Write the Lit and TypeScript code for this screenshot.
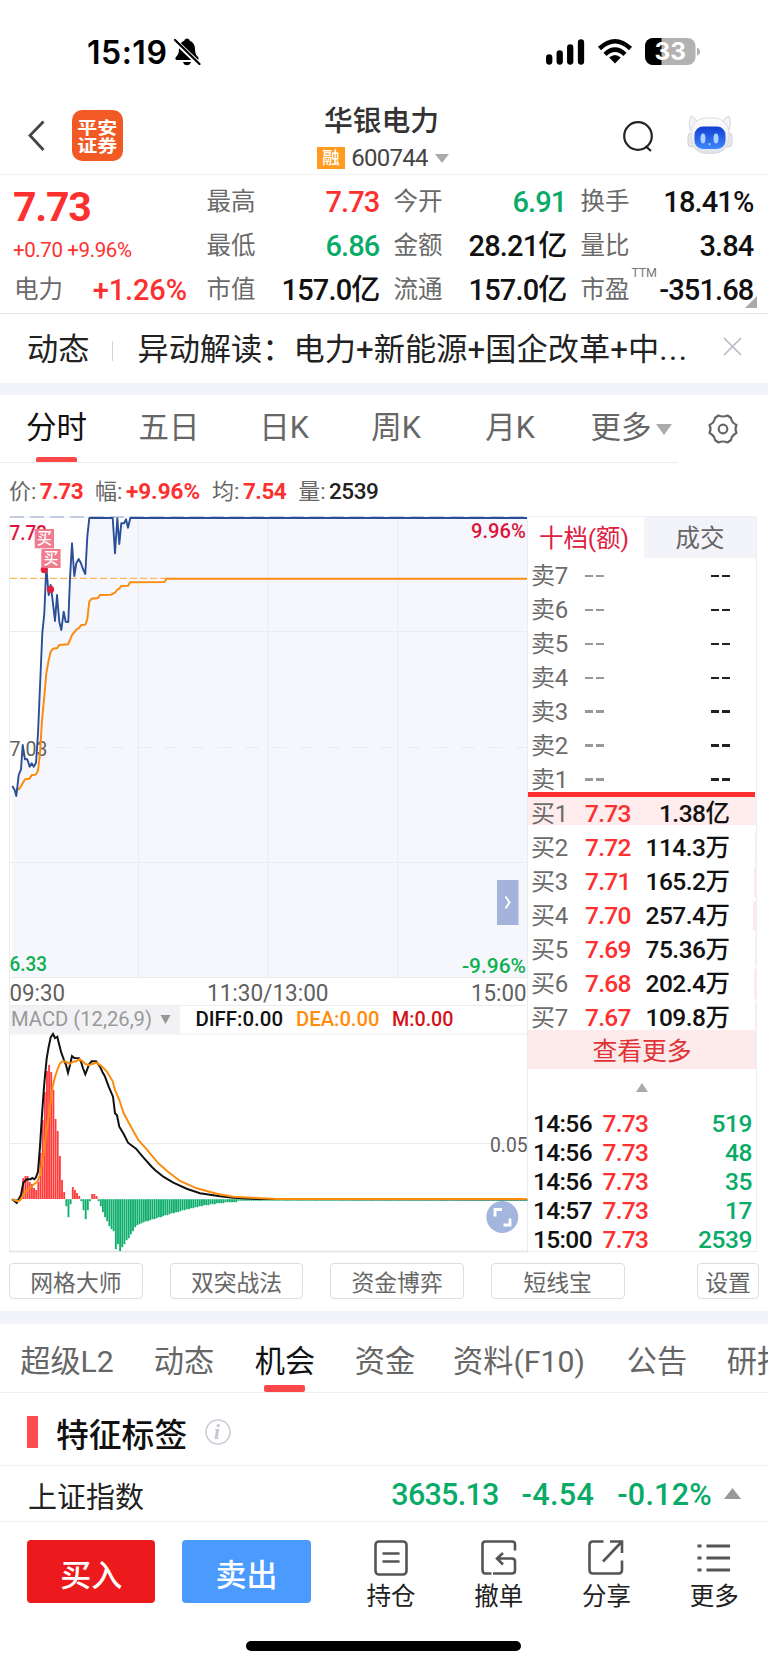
import { LitElement, html, svg, css } from "lit";
import { customElement } from "lit/decorators.js";

type Pt = [number, number];

/* Session price samples, in chart coordinates (origin at the chart's top left). */
const scale = (pts: Pt[], dy: number): Pt[] => pts.map(([x, y]) => [x / 3, y / 3 + dy]);
const PRICE = scale([
  [37,858],[44,870],[49,888],[56,825],[63,808],[68,735],[75,778],[82,778],[89,800],[95,790],[101,800],[108,788],
  [114,700],[120,560],[127,400],[133,340],[139,200],[146,285],[152,255],[159,310],[165,363],[171,285],[178,365],
  [184,390],[191,335],[197,365],[205,366],[210,235],[216,130],[223,228],[229,190],[236,177],[242,188],[249,207],
  [256,222],[262,110],[268,54],[338,54],[345,160],[352,55],[358,132],[364,70],[372,70],[378,58],[384,83],[391,54],
  [1581,54]], -16);
const AVERAGE = scale([
  [49,868],[57,868],[65,855],[75,838],[88,836],[95,826],[107,824],[114,812],[120,760],[126,660],[133,590],[139,520],
  [146,480],[152,455],[159,446],[172,444],[178,435],[204,433],[210,420],[216,405],[230,388],[237,384],[243,376],
  [256,374],[262,358],[268,305],[275,296],[294,294],[300,285],[333,284],[346,277],[352,269],[358,266],[364,258],
  [384,257],[391,247],[493,246],[500,236],[1581,236]], -16);
const DIFF = scale([
  [37,538],[50,549],[63,525],[70,488],[80,478],[92,478],[97,474],[103,478],[108,472],[114,455],[120,380],[127,270],
  [133,190],[140,115],[146,80],[152,52],[159,42],[165,54],[172,50],[178,75],[184,98],[192,120],[198,135],[204,158],
  [210,135],[216,108],[223,114],[237,115],[243,125],[249,145],[256,163],[268,132],[275,124],[288,124],[300,140],
  [307,155],[314,168],[326,200],[339,230],[345,280],[351,286],[358,320],[371,342],[384,368],[408,386],[430,412],
  [455,440],[465,450],[490,470],[520,488],[560,506],[600,520],[660,529],[700,533],[770,537],[1581,538]], 504);
const DEA = scale([
  [37,538],[50,543],[57,543],[63,537],[75,518],[85,508],[100,494],[112,485],[120,465],[130,410],[140,330],[150,260],
  [158,200],[165,170],[172,150],[180,130],[188,124],[200,126],[208,132],[218,126],[230,123],[238,118],[248,124],
  [256,132],[266,136],[288,128],[302,136],[320,154],[338,184],[345,210],[358,240],[371,280],[390,315],[415,360],
  [440,388],[475,430],[505,456],[540,483],[590,505],[650,521],[700,530],[770,534],[830,537],[1581,537]], 504);
/* Height of each MACD bar against the zero line; positive is red. */
const BARS: number[] = [-1,-2,-4,0,4,21,23,23,17,15,11,9,17,46,79,107,128,134,127,109,80,68,43,19,7,-7,-18,-5,12,9,6,3,
  -2,-11,-20,-11,-2,5,5,3,-2,-7,-13,-18,-22,-27,-30,-32,-50,-45,-52,-48,-45,-41,-39,-35,-32,-28,-26,-25,-24,-23,-22,
  -22,-21,-20,-20,-19,-18,-18,-17,-16,-16,-15,-14,-14,-13,-13,-12,-11,-11,-10,-10,-9,-9,-8,-8,-7,-7,-6,-6,-6,-5,-5,-5,
  -4,-4,-4,-4,-3,-3,-3,-3,-3,-3];
while (BARS.length < 240) BARS.push(-1.5);

const path = (p: Pt[]) => "M" + p.map(([x, y]) => `${x.toFixed(1)} ${y.toFixed(1)}`).join("L");

@customElement("stock-chart")
class StockChart extends LitElement {
  static styles = css`
    :host { display: block; width: 528px; height: 737px; }
    svg { display: block; font-family: Roboto, "Noto Sans CJK SC", sans-serif; }
    .grid { stroke: #ebecef; stroke-width: 1; fill: none; }
    .area { fill: #f5f7fc; }
    .price { stroke: #2b4f96; stroke-width: 1.9; fill: none; stroke-linejoin: round; }
    .avg { stroke: #fb8c10; stroke-width: 2; fill: none; }
    .diff { stroke: #111; stroke-width: 2; fill: none; }
    .gray { fill: #606060; }
    .soft { fill: #999; }
    .up { fill: #dc143c; }
    .down { fill: #10b050; }
    .black { fill: #111; font-weight: 500; }
    .orange { fill: #ff8c0a; font-weight: 500; }
    .red { fill: #d41219; font-weight: 500; }
    .mark { fill: #ef7285; fill-opacity: .93; }
    .white { fill: #fff; font-weight: 500; }
    .m { font-weight: 500; }
  `;
  render() {
    const t = (s: string, x: number, y: number, w: number, size: number, c: string) =>
      svg`<text x=${x} y=${y} textLength=${w} lengthAdjust="spacingAndGlyphs" font-size=${size} class=${c}>${s}</text>`;
    return html`<svg width="528" height="737" viewBox="0 0 528 737">
      <path class="area" d="${path(PRICE)}L527 461L12.3 461Z" />
      <path class="grid" d="M9.5 1V736M138.5 1V461M268 1V461M398 1V461M527.5 1V736M9 1H528M9 115.5H527M9 461.5H528M9 346.5H527M9 489.5H528M9 518H528M9 627.5H527" />
      <path class="grid" stroke-dasharray="14 13" d="M56 231.5H527" />
      <path d="M9 735.5H528" stroke="#e8e8ea" stroke-width="2" />
      ${t("7.73", 9.5, 23.5, 37.5, 20, "up m")}
      ${t("9.96%", 471, 21.5, 55, 20, "up m")}
      ${t("7.03", 9.5, 239.5, 38, 20.5, "gray")}
      ${t("6.33", 9.5, 455, 37.5, 20, "down m")}
      ${t("-9.96%", 462, 457, 64, 20, "down m")}
      <path d="M10 1H527" stroke="#8fa2cb" stroke-dasharray="14 6" />
      <path d="M10 62.3H172" stroke="#fdb65e" stroke-width="1.3" stroke-dasharray="7 3" />
      <path class="avg" d=${path(AVERAGE)} />
      <path class="price" d=${path(PRICE)} />
      <circle cx="44.3" cy="53.7" r="3.6" fill="#e0203f" />
      <circle cx="50.5" cy="73.4" r="3.6" fill="#e0203f" />
      <rect class="mark" x="34.7" y="13" width="19.3" height="19.3" />
      <rect class="mark" x="41.3" y="33" width="19.3" height="19" />
      ${t("买", 37, 28.2, 15, 15.5, "white")}
      ${t("买", 43.5, 48, 15, 15.5, "white")}
      <rect x="497" y="364" width="21.5" height="45" fill="#a3b3dc" />
      <path d="M505.5 380.5L509.5 386.5L505.5 392.5" stroke="#fff" stroke-width="2" fill="none" />

      ${t("09:30", 9.5, 485, 55.5, 23, "gray")}
      ${t("11:30/13:00", 207, 485, 121.5, 23, "gray")}
      ${t("15:00", 471, 485, 55.5, 23, "gray")}

      <rect x="10" y="490" width="170" height="27" fill="#f2f2f4" />
      ${t("MACD (12,26,9)", 11, 509.5, 141, 21, "soft")}
      <path d="M160.5 499h10l-5 9z" fill="#969696" />
      ${t("DIFF:0.00", 195.5, 509.5, 87.5, 20.5, "black")}
      ${t("DEA:0.00", 296, 509.5, 83.5, 20.5, "orange")}
      ${t("M:0.00", 392, 509.5, 61.5, 20.5, "red")}

      ${BARS.map((h, i) => svg`<rect x=${11.6 + i * 2.152} y=${h > 0 ? 683 - h : 683.2} width="1.85"
        height=${Math.abs(h)} fill=${h > 0 ? "#ff3b3b" : "#10ae6c"} />`)}
      <path class="diff" d=${path(DIFF)} />
      <path class="avg" d=${path(DEA)} />
      ${t("0.05", 490, 635.5, 37.5, 20, "gray")}
      <circle cx="502.3" cy="701" r="16" fill="#a5b6de" />
      <path d="M495 700.5V693.5H502M503.5 709H510V702.5" stroke="#fff" stroke-width="2.8" fill="none" />
    </svg>`;
  }
}

@customElement("order-book")
class OrderBook extends LitElement {
  static styles = css`
    :host { display: block; width: 229px; height: 736px; box-sizing: border-box; border: solid #eeeff2; border-width: 1px 1px 1px 0; }
    .tabs { display: flex; height: 41px; }
    .tab { flex: 1; display: flex; align-items: center; justify-content: center; font-size: 24.5px; color: #666; background: #f3f4f9; letter-spacing: -.1px; padding-bottom: 2px; }
    .tab.on { background: #fff; color: #e0203f; padding-right: 4px; }
    .row { display: grid; grid-template-columns: 53px 50px 1fr; height: 33.95px; align-items: center; padding: 3px 26.5px 0 3px; box-sizing: border-box; font-size: 24.5px; line-height: 30px; position: relative; }
    .row.first { background: linear-gradient(#ffecec, #ffecec) 0 1px / 100% 28px no-repeat; }
    .n { color: #6b6b6b; white-space: nowrap; font-size: 24px; letter-spacing: -.3px; }
    .p { color: #fd2f2f; font-weight: 500; letter-spacing: -.7px; padding-left: 1px; }
    .v { color: #111; font-weight: 500; text-align: right; white-space: nowrap; letter-spacing: -.5px; }
    .bar { position: absolute; right: 0; top: 4px; height: 30px; background: #ffe9e9; }
    .dash { display: flex; gap: 3px; padding-left: 1px; }
    .dash.r { justify-content: flex-end; }
    .dash i { width: 8px; height: 2.5px; background: #999; }
    .dash.r i { background: #222; }
    .sells { height: 234px; }
    .limit { height: 5.5px; background: #fd2f2f; margin-right: 1px; }
    .buys { height: 232.5px; }
    .buys .row { top: -1.5px; }
    .more { height: 39px; background: #fdeaea; color: #e13337; font-size: 24.8px; display: flex; align-items: center; justify-content: center; }
    .up { height: 38px; display: flex; align-items: center; justify-content: center; }
    .deal { display: grid; grid-template-columns: 68.5px 60px 1fr; height: 28.9px; align-items: center; padding: 0 4px 0 5px; font-size: 24.5px; font-weight: 500; color: #111; line-height: 28px; letter-spacing: -.65px; }
    .deals { padding-top: 3.5px; }
    .q { text-align: right; color: #0aab68; letter-spacing: -.4px; }
  `;
  render() {
    const buys: [string, string, number][] = [["7.73", "1.38亿", 0], ["7.72", "114.3万", 1], ["7.71", "165.2万", 2],
      ["7.70", "257.4万", 3.5], ["7.69", "75.36万", 0.6], ["7.68", "202.4万", 2.5], ["7.67", "109.8万", 1]];
    const deals = [["14:56", "519"], ["14:56", "48"], ["14:56", "35"], ["14:57", "17"], ["15:00", "2539"]];
    return html`
      <div class="tabs"><div class="tab on">十档(额)</div><div class="tab">成交</div></div>
      <div class="sells">${[7, 6, 5, 4, 3, 2, 1].map(n => html`<div class="row">
        <span class="n">卖${n}</span><span class="dash"><i></i><i></i></span><span class="dash r"><i></i><i></i></span></div>`)}</div>
      <div class="limit"></div>
      <div class="buys">${buys.map(([p, v, w], i) => html`<div class="row ${i ? "" : "first"}">
        <span class="n">买${i + 1}</span><span class="p">${p}</span><span class="v">${v}</span>
        <span class="bar" style="width:${w}px"></span></div>`)}</div>
      <div class="more">查看更多</div>
      <div class="up"><svg width="12" height="9"><path d="M6 0L12 9H0Z" fill="#aaa"/></svg></div>
      <div class="deals">${deals.map(([t, q]) => html`<div class="deal"><span>${t}</span><span class="p">7.73</span><span class="q">${q}</span></div>`)}</div>`;
  }
}

@customElement("app-root")
class AppRoot extends LitElement {
  static styles = css`
    :host { display: block; width: 768px; height: 1665px; overflow: hidden; background: #fff; color: #111; font-family: Roboto, "Noto Sans CJK SC", sans-serif; }
    * { box-sizing: border-box; }
    svg { display: block; flex: none; }
    .status { height: 101px; display: flex; align-items: flex-start; padding: 37px 68px 0 87px; }
    .clock { font: 600 32px/31px Inter, sans-serif; letter-spacing: .5px; width: 86px; color: #000; white-space: nowrap; }
    .sp { flex: 1; }
    .wifi, .battery { margin-left: 11px; }
    .head { height: 74px; display: flex; border-bottom: 1px solid #f0f0f2; padding: 0 35px 0 27px; }
    .head > * { flex: none; }
    .back { margin: 19px 26px 0 0; }
    .logo { margin-top: 9px; width: 50.5px; height: 51px; border-radius: 10px; background: #f15a24; color: #fff; font: 700 20px/20px "Noto Sans CJK SC", sans-serif; text-align: center; padding-top: 5.5px; }
    .logo span { display: block; transform: scaleY(.87); }
    .title { margin-left: 144px; width: 230px; text-align: center; display: flex; flex-direction: column; align-items: center; }
    .name { font-size: 28.8px; line-height: 34px; color: #333; padding-top: 3px; height: 42px; width: 118px; white-space: nowrap; font-weight: 500; }
    .code { display: flex; align-items: center; height: 28px; font-size: 24px; color: #444; letter-spacing: -.7px; margin-left: 3px; margin-top: 1px; }
    .rong { width: 28px; height: 22px; background: #ff9c20; color: #fff; font-size: 17.5px; line-height: 22px; font-weight: 500; margin-right: 6px; padding-left: 5px; display: flex; align-items: center; }
    .tri { margin-left: 7px; }
    .find { margin: 19px 0 0 125px; }
    .bot { margin: 14px 0 0 33px; }
    .quote { height: 138.5px; border-bottom: 1.5px solid #e6e6f0; display: grid; grid-template-columns: 178.500px 173px 173px 173px; column-gap: 14px; padding: 0 14px; position: relative; }
    .col { display: flex; flex-direction: column; padding-top: 5px; }
    .cell { height: 44px; display: flex; justify-content: space-between; align-items: center; font-size: 29px; font-weight: 500; line-height: 34px; letter-spacing: -.85px; white-space: nowrap; color: #111; position: relative; }
    .col:first-child .cell { width: 173px; letter-spacing: -.1px; }
    .lab { font-size: 24.5px; color: #6a6a6a; font-weight: 400; letter-spacing: 0; }
    .red { color: #fd3030; }
    .green { color: #0aab68; }
    .big { font-size: 41px; font-weight: 700; color: #fd3030; height: 57px; line-height: 55px; letter-spacing: -1.2px; margin-left: -1px; }
    .chg { font-size: 20.5px; color: #fd3030; font-weight: 400; height: 31px; line-height: 26px; white-space: nowrap; letter-spacing: -.4px; margin-left: -1px; }
    .ttm { position: absolute; left: 51px; top: -2px; font-size: 12.5px; line-height: 14px; font-weight: 400; color: #777; letter-spacing: -.2px; }
    .corner { position: absolute; right: 11px; bottom: 5px; }
    .news { height: 69px; display: flex; align-items: center; font-size: 31.2px; color: #222; padding: 0 26px 3px 27px; white-space: nowrap; }
    .vr { width: 1px; height: 20px; background: #d4d4d8; margin: 8px 24px 0 23px; }
    .headline { width: 555px; letter-spacing: .05px; }
    .dots { letter-spacing: 1.6px; }
    .close { margin-left: auto; margin-bottom: 0; }
    .band { height: 12.5px; background: #f3f4f9; }
    .tabs { height: 68px; display: flex; padding-top: 15px; position: relative; font-size: 30.5px; line-height: 36px; color: #666; }
    .tabs .line { position: absolute; left: 0; bottom: 0; height: 1px; width: 678px; background: #ececef; }
    .more-arrow { margin: 14px 0 0 -15px; }
    .gear { margin: 3px 0 0 35px; }
    .t { display: flex; flex: none; justify-content: center; position: relative; white-space: nowrap; }
    .t.on { color: #111; }
    .t.on::after { content: ""; position: absolute; left: 50%; margin-left: -21px; width: 41px; height: 6.5px; border-radius: 2px; background: #fb4747; bottom: 0; }
    .info { height: 52.5px; display: flex; align-items: center; padding-left: 9px; padding-top: 4px; font-size: 22px; color: #666; line-height: 28px; gap: 12px; }
    .info b { font-weight: 700; color: #fd3030; font-size: 22.5px; letter-spacing: -.5px; margin-left: 3.5px; }
    .info b.w { letter-spacing: 0; }
    .info b.k { color: #222; font-weight: 500; }
    .main { display: flex; height: 737px; }
    .tools { display: flex; height: 58.5px; padding: 10px 9px 0; gap: 26.8px; }
    .btn { width: 133.8px; height: 36px; border: 1.5px solid #dedede; border-radius: 4px; display: flex; align-items: center; justify-content: center; font-size: 22.8px; color: #666; padding-top: 1px; }
    .btn.set { width: 62px; margin-left: auto; }
    .tabs2 { height: 69px; display: flex; padding: 15px 0 0 18px; border-bottom: 1px solid #f0f0f4; font-size: 30.2px; line-height: 46px; color: #666; overflow: hidden; }
    .tag { height: 73px; display: flex; align-items: center; padding: 8px 0 0 27px; border-bottom: 1.5px solid #f0f0f4; font-size: 32.8px; font-weight: 500; }
    .pin { width: 11px; height: 32px; background: #fd4d50; margin-right: 18px; margin-bottom: 2px; }
    .i { margin: 0 0 2px 18px; }
    .index { height: 56px; display: flex; align-items: center; border-bottom: 1.5px solid #f0f0f4; padding: 3px 27px 0 28px; color: #222; font-size: 29px; }
    .index .green { font-size: 30.5px; font-weight: 500; letter-spacing: -.75px; margin-left: 23px; }
    .index .green.b { letter-spacing: .35px; }
    .index .green.c { letter-spacing: .25px; }
    .index svg { margin: 0 0 3px 12px; }
    .actions { height: 119.5px; display: flex; padding: 18px 0 0 27px; }
    .trade { width: 128.5px; height: 63px; border-radius: 4px; background: #ec1a1c; color: #fff; font-size: 31px; font-weight: 500; display: flex; align-items: center; justify-content: center; margin-right: 27px; padding-top: 2px; }
    .trade.sell { background: #4b9afe; margin-right: 26.5px; }
    .act { width: 107.8px; display: flex; flex-direction: column; align-items: center; font-size: 24.5px; line-height: 30px; color: #222; }
    .act svg { margin-bottom: 6.5px; }
    .home { width: 275px; height: 9.5px; border-radius: 5px; background: #000; margin: 0 0 0 246px; }
  `;
  render() {
    const cell = (l: string, v: string, c = "", extra: unknown = "") =>
      html`<div class="cell"><span class="lab">${l}</span>${extra}<span class=${c}>${v}</span></div>`;
    const tab = (s: string, w: number, on = false) => html`<div class="t ${on ? "on" : ""}" style="width:${w}px">${s}</div>`;
    return html`
      <div class="status">
        <span class="clock">15:19</span>
        <svg width="28" height="29" viewBox="0 0 28 29"><path fill="#000" d="M14 1.5c1.5 0 2.5 1 2.7 2.2 3.6 1.3 5.3 4.300 5.300 8.300 0 4.500 1.500 6.300 3 8 1.200 1.500.7 3-1 3H4c-1.700 0-2.200-1.500-1-3 1.500-1.700 3-3.500 3-8 0-4 1.700-7 5.300-8.300C11.500 2.500 12.500 1.500 14 1.500zM10 25h8c-.5 2-2 3.300-4 3.300S10.500 27 10 25z"/><path d="M1.500 3.500L26 27" stroke="#fff" stroke-width="5"/><path d="M2 3L26.500 27" stroke="#000" stroke-width="2.200" stroke-linecap="round"/></svg>
        <span class="sp"></span>
        <svg width="40" height="30" viewBox="0 0 40 30"><path d="M3.200 20.500v4M13.700 16.500v8M24.200 10.500v14M35 5.500v19" stroke="#000" stroke-width="6.300" stroke-linecap="round"/></svg>
        <svg class="wifi" width="36" height="30" viewBox="0 0 36 30" fill="none" stroke="#000" stroke-width="4.500"><path d="M2.500 11.500Q18-3 33.500 11.500M8 17.300Q18 8 28 17.300"/><path d="M18 26.500L12.200 20.500Q18 15.500 23.800 20.500Z" fill="#000" stroke="none"/></svg>
        <svg class="battery" width="56" height="30" viewBox="0 0 56 30"><defs><clipPath id="b"><rect x="1" y="1" width="50.500" height="27" rx="8"/></clipPath></defs><g clip-path="url(#b)"><rect width="55" height="30" fill="#b2b2b2"/><rect width="17.500" height="30" fill="#000"/></g><path d="M53 10.500q3 1 3 4t-3 4z" fill="#b2b2b2"/><text x="10.500" y="23.300" textLength="31.500" lengthAdjust="spacingAndGlyphs" font-family="Inter" font-weight="700" font-size="24" fill="#fff">33</text></svg>
      </div>
      <div class="head">
        <svg class="back" width="19" height="32" viewBox="0 0 19 32"><path d="M16.500 1.500L3 15.500L16.500 30" fill="none" stroke="#444" stroke-width="2.800"/></svg>
        <div class="logo"><span>平安<br/>证券</span></div>
        <div class="title">
          <div class="name">华银电力</div>
          <div class="code"><span class="rong">融</span>600744<svg class="tri" width="14" height="9"><path d="M0 0H14L7 9Z" fill="#aaa"/></svg></div>
        </div>
        <svg class="find" width="32" height="34" viewBox="0 0 32 34" fill="none" stroke="#222" stroke-width="2.200"><circle cx="16" cy="16" r="13.800"/><path d="M23.500 26L29 31"/></svg>
        <svg class="bot" width="46" height="42" viewBox="0 0 46 42"><defs><linearGradient id="f" x1="0" y1="0" x2="0" y2="1"><stop offset="0" stop-color="#123fd0"/><stop offset="1" stop-color="#3f86ff"/></linearGradient><linearGradient id="w" x1="0" y1="0" x2="0" y2="1"><stop offset="0" stop-color="#fff"/><stop offset="1" stop-color="#dfe1e8"/></linearGradient></defs>
          <path d="M3 15Q1 7 4 1Q8 2 11 8L35 8Q38 2 42 1Q45 7 42 15Z" fill="#f3f4f7" stroke="#d5d7df"/><rect x="1" y="18" width="7" height="14" rx="3.500" fill="#e6e8ee" stroke="#cfd2da"/><rect x="38" y="18" width="7" height="14" rx="3.500" fill="#e6e8ee" stroke="#cfd2da"/>
          <rect x="4" y="3" width="38" height="35.500" rx="15" fill="url(#w)" stroke="#dcdde3"/><rect x="7.500" y="11.500" width="31" height="22.500" rx="8.500" fill="url(#f)"/><ellipse cx="16" cy="23.500" rx="2.500" ry="5" fill="#a9d2ff"/><ellipse cx="29" cy="23.500" rx="2.500" ry="5" fill="#a9d2ff"/><path d="M21 28.500h3l-1.500 2z" fill="#cfe5ff"/></svg>
      </div>
      <div class="quote">
        <div class="col"><div class="big">7.73</div><div class="chg">+0.70 +9.96%</div>
          ${cell("电力", "+1.26%", "red")}</div>
        <div class="col">${cell("最高", "7.73", "red")}${cell("最低", "6.86", "green")}${cell("市值", "157.0亿")}</div>
        <div class="col">${cell("今开", "6.91", "green")}${cell("金额", "28.21亿")}${cell("流通", "157.0亿")}</div>
        <div class="col">${cell("换手", "18.41%")}${cell("量比", "3.84")}${cell("市盈", "-351.68", "", html`<span class="ttm">TTM</span>`)}</div>
        <svg class="corner" width="12" height="12"><path d="M12 0V12H0Z" fill="#aaa"/></svg>
      </div>
      <div class="news"><span>动态</span><span class="vr"></span><span class="headline">异动解读：电力+新能源+国企改革+中<span class="dots">...</span></span>
        <svg class="close" width="19" height="19" viewBox="0 0 19 19"><path d="M1 1L18 18M18 1L1 18" stroke="#b9bac8" stroke-width="1.700"/></svg></div>
      <div class="band"></div>
      <div class="tabs">${tab("分时", 113, true)}${tab("五日", 112)}${tab("日K", 118)}${tab("周K", 106)}${tab("月K", 122)}${tab("更多", 100)}
        <svg class="more-arrow" width="16" height="11"><path d="M0 0H16L8 11Z" fill="#aaa"/></svg>
        <svg class="gear" width="32" height="32" viewBox="0 0 32 32" fill="none" stroke="#666" stroke-width="2.200"><path d="M11.500 2.500Q16 4.500 20.500 2.500L24 5Q24.500 9.500 29.500 12Q27.500 16 29.500 20Q24.500 22.500 24 27L20.500 29.500Q16 27.500 11.500 29.500L8 27Q7.500 22.500 2.500 20Q4.500 16 2.500 12Q7.500 9.500 8 5Z" stroke-linejoin="round"/><circle cx="16" cy="16" r="4.300"/></svg>
        <span class="line"></span></div>
      <div class="info"><span>价:<b>7.73</b></span><span>幅:<b class="w">+9.96%</b></span><span>均:<b>7.54</b></span><span>量:<b class="k">2539</b></span></div>
      <div class="main"><stock-chart></stock-chart><order-book></order-book></div>
      <div class="tools"><div class="btn">网格大师</div><div class="btn">双突战法</div><div class="btn">资金博弈</div><div class="btn">短线宝</div><div class="btn set">设置</div></div>
      <div class="band"></div>
      <div class="tabs2">${tab("超级L2", 98)}${tab("动态", 136)}${tab("机会", 66, true)}${tab("资金", 134)}${tab("资料(F10)", 134)}${tab("公告", 142)}${tab("研报", 58)}</div>
      <div class="tag"><span class="pin"></span><span>特征标签</span>
        <svg class="i" width="26" height="26" viewBox="0 0 26 26"><circle cx="13" cy="13" r="12" fill="none" stroke="#c9cad6" stroke-width="1.500"/><text x="9" y="20" font-family="Liberation Serif" font-style="italic" font-weight="700" font-size="21" fill="#c3c4d2">i</text></svg></div>
      <div class="index"><span>上证指数</span><span class="sp"></span><span class="green">3635.13</span><span class="green b">-4.54</span><span class="green c">-0.12%</span>
        <svg width="17" height="11"><path d="M8.500 0L17 11H0Z" fill="#999"/></svg></div>
      <div class="actions">
        <div class="trade">买入</div><div class="trade sell">卖出</div>
        <div class="act"><svg width="36" height="36" viewBox="0 0 36 36" fill="none" stroke="#555" stroke-width="2.600"><rect x="2.500" y="1.500" width="31" height="33" rx="3.500"/><path d="M9.500 13.500h17M9.500 21.500h17"/></svg>持仓</div>
        <div class="act"><svg width="36" height="36" viewBox="0 0 36 36" fill="none" stroke="#555" stroke-width="2.600"><path d="M34 10.500V4.500Q34 1.500 31 1.500H4.500Q1.500 1.500 1.500 4.500V29.500Q1.500 33.500 4.500 33.500H10.500"/><path d="M22 13L16 18.500L22 24.500M16 18.500H31Q34 18.500 34 21.500V30.500Q34 33.500 31 33.500H12"/></svg>撤单</div>
        <div class="act"><svg width="36" height="36" viewBox="0 0 36 36" fill="none" stroke="#555" stroke-width="2.600"><path d="M15.500 1.500H5Q1.500 1.500 1.500 5V30Q1.500 33.500 5 33.500H30.500Q34 33.500 34 30V20.500"/><path d="M15 21.500L33.500 2M22 1.500H34V13"/></svg>分享</div>
        <div class="act"><svg width="36" height="36" viewBox="0 0 36 36" fill="none" stroke="#555" stroke-width="3"><path d="M1.500 6h4M10.500 6H34M1.500 18h4M10.500 18H34M1.500 30h4M10.500 30H34"/></svg>更多</div>
      </div>
      <div class="home"></div>`;
  }
}
